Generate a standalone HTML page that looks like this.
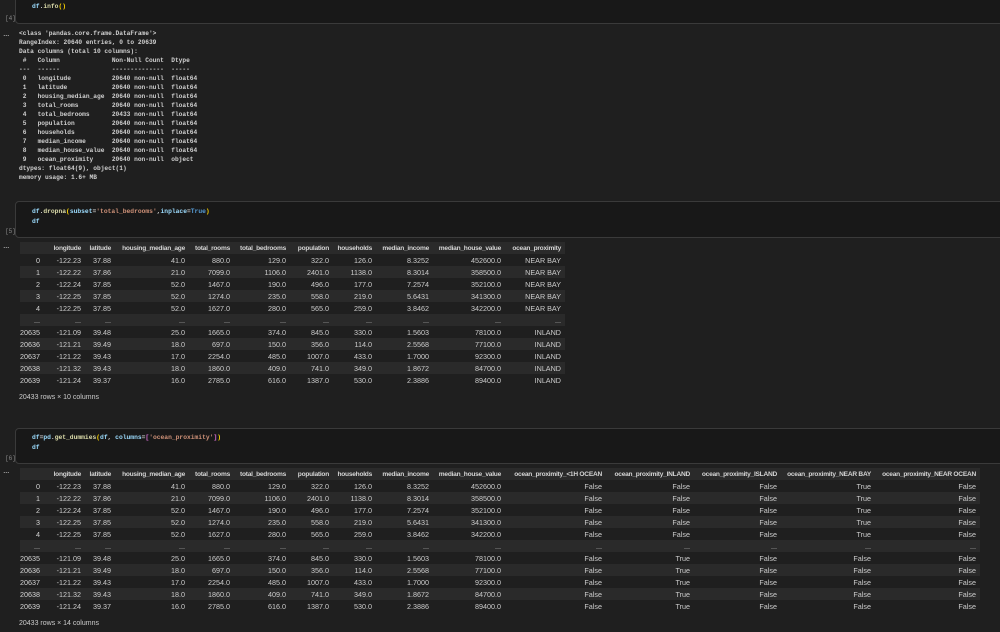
<!DOCTYPE html>
<html><head><meta charset="utf-8"><style>
*{margin:0;padding:0;box-sizing:border-box}
body{width:1000px;height:632px;background:#1f1f1f;position:relative;overflow:hidden;font-family:"Liberation Sans",sans-serif;color:#cccccc}
.cell{position:absolute;left:15px;right:-5px;background:#181818;border:1px solid #3a3a3a;border-radius:4px}
.code{position:absolute;left:32px;font-family:"Liberation Mono",monospace;font-size:6.3px;line-height:10px;color:#9cdcfe;white-space:pre;font-weight:bold}
.lbl{position:absolute;left:5px;font-family:"Liberation Mono",monospace;font-size:6px;color:#888}
.dots{position:absolute;left:3px;font-size:9px;color:#bbb;letter-spacing:-0.5px}
.pre{position:absolute;left:19px;top:29px;font-family:"Liberation Mono",monospace;font-size:6.2px;line-height:9px;color:#d0d0d0;white-space:pre;font-weight:bold}
table{position:absolute;left:20px;border-collapse:collapse;table-layout:fixed;font-size:7.2px}
td,th{height:12px;padding:0 4px 0 0;text-align:right;white-space:nowrap;overflow:hidden}
th{font-weight:bold;color:#d4d4d4;font-size:6.6px;letter-spacing:-0.25px}
tr th:first-child{font-weight:normal;font-size:7.2px;letter-spacing:0}
tr:nth-child(odd){background:#2a2a2a}
.foot{position:absolute;left:19px;font-size:7px;color:#ccc}
.f{color:#dcdcaa}.p{color:#ffd700}.s{color:#ce9178}.k{color:#569cd6}.o{color:#d4d4d4}.p2{color:#da70d6}
</style></head><body>

<div class="cell" style="top:-6px;height:30px;"></div>
<div class="code" style="top:2px"><span>df</span><span class="o">.</span><span class="f">info</span><span class="p">()</span></div>
<div class="lbl" style="top:15px">[4]</div>
<div class="dots" style="top:28px">...</div>
<div class="pre">&lt;class 'pandas.core.frame.DataFrame'&gt;
RangeIndex: 20640 entries, 0 to 20639
Data columns (total 10 columns):
 #   Column              Non-Null Count  Dtype  
---  ------              --------------  -----  
 0   longitude           20640 non-null  float64
 1   latitude            20640 non-null  float64
 2   housing_median_age  20640 non-null  float64
 3   total_rooms         20640 non-null  float64
 4   total_bedrooms      20433 non-null  float64
 5   population          20640 non-null  float64
 6   households          20640 non-null  float64
 7   median_income       20640 non-null  float64
 8   median_house_value  20640 non-null  float64
 9   ocean_proximity     20640 non-null  object 
dtypes: float64(9), object(1)
memory usage: 1.6+ MB</div>

<div class="cell" style="top:201px;height:37px;"></div>
<div class="code" style="top:207px"><span>df</span><span class="o">.</span><span class="f">dropna</span><span class="p">(</span><span>subset</span><span class="o">=</span><span class="s">'total_bedrooms'</span><span class="o">,</span><span>inplace</span><span class="o">=</span><span class="k">True</span><span class="p">)</span>
df</div>
<div class="lbl" style="top:228px">[5]</div>
<div class="dots" style="top:240px">...</div>

<table style="top:242px;width:545px">
<colgroup><col style="width:24px"><col style="width:41px"><col style="width:30px"><col style="width:74px"><col style="width:45px"><col style="width:56px"><col style="width:43px"><col style="width:43px"><col style="width:57px"><col style="width:72px"><col style="width:60px"></colgroup>
<tr><th></th><th>longitude</th><th>latitude</th><th>housing_median_age</th><th>total_rooms</th><th>total_bedrooms</th><th>population</th><th>households</th><th>median_income</th><th>median_house_value</th><th>ocean_proximity</th></tr>
<tr><th>0</th><td>-122.23</td><td>37.88</td><td>41.0</td><td>880.0</td><td>129.0</td><td>322.0</td><td>126.0</td><td>8.3252</td><td>452600.0</td><td>NEAR BAY</td></tr>
<tr><th>1</th><td>-122.22</td><td>37.86</td><td>21.0</td><td>7099.0</td><td>1106.0</td><td>2401.0</td><td>1138.0</td><td>8.3014</td><td>358500.0</td><td>NEAR BAY</td></tr>
<tr><th>2</th><td>-122.24</td><td>37.85</td><td>52.0</td><td>1467.0</td><td>190.0</td><td>496.0</td><td>177.0</td><td>7.2574</td><td>352100.0</td><td>NEAR BAY</td></tr>
<tr><th>3</th><td>-122.25</td><td>37.85</td><td>52.0</td><td>1274.0</td><td>235.0</td><td>558.0</td><td>219.0</td><td>5.6431</td><td>341300.0</td><td>NEAR BAY</td></tr>
<tr><th>4</th><td>-122.25</td><td>37.85</td><td>52.0</td><td>1627.0</td><td>280.0</td><td>565.0</td><td>259.0</td><td>3.8462</td><td>342200.0</td><td>NEAR BAY</td></tr>
<tr><th>...</th><td>...</td><td>...</td><td>...</td><td>...</td><td>...</td><td>...</td><td>...</td><td>...</td><td>...</td><td>...</td></tr>
<tr><th>20635</th><td>-121.09</td><td>39.48</td><td>25.0</td><td>1665.0</td><td>374.0</td><td>845.0</td><td>330.0</td><td>1.5603</td><td>78100.0</td><td>INLAND</td></tr>
<tr><th>20636</th><td>-121.21</td><td>39.49</td><td>18.0</td><td>697.0</td><td>150.0</td><td>356.0</td><td>114.0</td><td>2.5568</td><td>77100.0</td><td>INLAND</td></tr>
<tr><th>20637</th><td>-121.22</td><td>39.43</td><td>17.0</td><td>2254.0</td><td>485.0</td><td>1007.0</td><td>433.0</td><td>1.7000</td><td>92300.0</td><td>INLAND</td></tr>
<tr><th>20638</th><td>-121.32</td><td>39.43</td><td>18.0</td><td>1860.0</td><td>409.0</td><td>741.0</td><td>349.0</td><td>1.8672</td><td>84700.0</td><td>INLAND</td></tr>
<tr><th>20639</th><td>-121.24</td><td>39.37</td><td>16.0</td><td>2785.0</td><td>616.0</td><td>1387.0</td><td>530.0</td><td>2.3886</td><td>89400.0</td><td>INLAND</td></tr>
</table>
<div class="foot" style="top:394px">20433 rows × 10 columns</div>

<div class="cell" style="top:428px;height:36px;"></div>
<div class="code" style="top:433px"><span>df</span><span class="o">=</span><span>pd</span><span class="o">.</span><span class="f">get_dummies</span><span class="p">(</span><span>df</span><span class="o">, </span><span>columns</span><span class="o">=</span><span class="p2">[</span><span class="s">'ocean_proximity'</span><span class="p2">]</span><span class="p">)</span>
df</div>
<div class="lbl" style="top:455px">[6]</div>
<div class="dots" style="top:465px">...</div>

<table style="top:468px;width:960px">
<colgroup><col style="width:24px"><col style="width:41px"><col style="width:30px"><col style="width:74px"><col style="width:45px"><col style="width:56px"><col style="width:43px"><col style="width:43px"><col style="width:57px"><col style="width:72px"><col style="width:101px"><col style="width:88px"><col style="width:87px"><col style="width:94px"><col style="width:105px"></colgroup>
<tr><th></th><th>longitude</th><th>latitude</th><th>housing_median_age</th><th>total_rooms</th><th>total_bedrooms</th><th>population</th><th>households</th><th>median_income</th><th>median_house_value</th><th>ocean_proximity_&lt;1H OCEAN</th><th>ocean_proximity_INLAND</th><th>ocean_proximity_ISLAND</th><th>ocean_proximity_NEAR BAY</th><th>ocean_proximity_NEAR OCEAN</th></tr>
<tr><th>0</th><td>-122.23</td><td>37.88</td><td>41.0</td><td>880.0</td><td>129.0</td><td>322.0</td><td>126.0</td><td>8.3252</td><td>452600.0</td><td>False</td><td>False</td><td>False</td><td>True</td><td>False</td></tr>
<tr><th>1</th><td>-122.22</td><td>37.86</td><td>21.0</td><td>7099.0</td><td>1106.0</td><td>2401.0</td><td>1138.0</td><td>8.3014</td><td>358500.0</td><td>False</td><td>False</td><td>False</td><td>True</td><td>False</td></tr>
<tr><th>2</th><td>-122.24</td><td>37.85</td><td>52.0</td><td>1467.0</td><td>190.0</td><td>496.0</td><td>177.0</td><td>7.2574</td><td>352100.0</td><td>False</td><td>False</td><td>False</td><td>True</td><td>False</td></tr>
<tr><th>3</th><td>-122.25</td><td>37.85</td><td>52.0</td><td>1274.0</td><td>235.0</td><td>558.0</td><td>219.0</td><td>5.6431</td><td>341300.0</td><td>False</td><td>False</td><td>False</td><td>True</td><td>False</td></tr>
<tr><th>4</th><td>-122.25</td><td>37.85</td><td>52.0</td><td>1627.0</td><td>280.0</td><td>565.0</td><td>259.0</td><td>3.8462</td><td>342200.0</td><td>False</td><td>False</td><td>False</td><td>True</td><td>False</td></tr>
<tr><th>...</th><td>...</td><td>...</td><td>...</td><td>...</td><td>...</td><td>...</td><td>...</td><td>...</td><td>...</td><td>...</td><td>...</td><td>...</td><td>...</td><td>...</td></tr>
<tr><th>20635</th><td>-121.09</td><td>39.48</td><td>25.0</td><td>1665.0</td><td>374.0</td><td>845.0</td><td>330.0</td><td>1.5603</td><td>78100.0</td><td>False</td><td>True</td><td>False</td><td>False</td><td>False</td></tr>
<tr><th>20636</th><td>-121.21</td><td>39.49</td><td>18.0</td><td>697.0</td><td>150.0</td><td>356.0</td><td>114.0</td><td>2.5568</td><td>77100.0</td><td>False</td><td>True</td><td>False</td><td>False</td><td>False</td></tr>
<tr><th>20637</th><td>-121.22</td><td>39.43</td><td>17.0</td><td>2254.0</td><td>485.0</td><td>1007.0</td><td>433.0</td><td>1.7000</td><td>92300.0</td><td>False</td><td>True</td><td>False</td><td>False</td><td>False</td></tr>
<tr><th>20638</th><td>-121.32</td><td>39.43</td><td>18.0</td><td>1860.0</td><td>409.0</td><td>741.0</td><td>349.0</td><td>1.8672</td><td>84700.0</td><td>False</td><td>True</td><td>False</td><td>False</td><td>False</td></tr>
<tr><th>20639</th><td>-121.24</td><td>39.37</td><td>16.0</td><td>2785.0</td><td>616.0</td><td>1387.0</td><td>530.0</td><td>2.3886</td><td>89400.0</td><td>False</td><td>True</td><td>False</td><td>False</td><td>False</td></tr>
</table>
<div class="foot" style="top:620px">20433 rows × 14 columns</div>
</body></html>
